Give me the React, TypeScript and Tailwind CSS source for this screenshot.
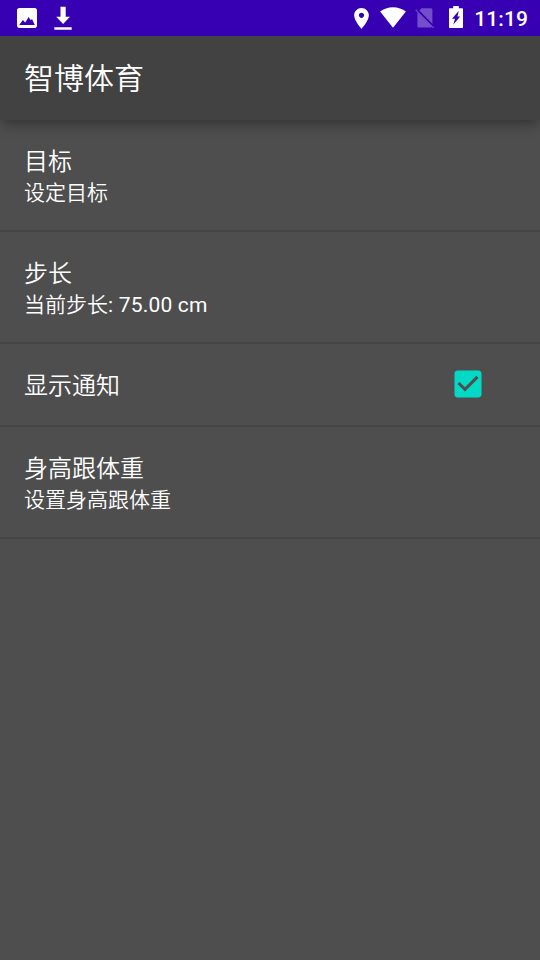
// Settings screen: status bar, toolbar and a flat list of preferences.

import { useState } from 'react';

type Preference = {
  id: string;
  title: string;
  summary?: string;
  value?: string;
  checkable?: boolean;
};

const PREFERENCES: Preference[] = [
  { id: 'goal', title: '目标', summary: '设定目标' },
  { id: 'step', title: '步长', summary: '当前步长', value: ': 75.00 cm' },
  { id: 'notify', title: '显示通知', checkable: true },
  { id: 'body', title: '身高跟体重', summary: '设置身高跟体重' },
];

export default function App() {
  const [notify, setNotify] = useState(true);

  return (
    <div className="flex h-[960px] w-[540px] flex-col overflow-hidden bg-[#4e4e4e] font-[Roboto,'Noto_Sans_CJK_SC',sans-serif] font-[350] text-white">
      <StatusBar />
      <header className="relative z-10 flex h-[84px] shrink-0 items-center bg-[#424242] px-6 pt-px shadow-[0_6px_12px_-2px_rgba(0,0,0,0.35)]">
        <h1 className="text-[30px] font-[350] leading-9">智博体育</h1>
      </header>
      <main className="flex flex-1 flex-col">
        {PREFERENCES.map((p) =>
          p.checkable ? (
            <button
              key={p.id}
              type="button"
              role="checkbox"
              aria-checked={notify}
              onClick={() => setNotify(!notify)}
              className="flex h-[83px] items-start justify-between border-b-2 border-[#454545] pl-6 pr-[54px] pt-[22px] text-left"
            >
              <span className="pt-1 text-2xl leading-8">{p.title}</span>
              <CheckBox checked={notify} />
            </button>
          ) : (
            <button
              key={p.id}
              type="button"
              className="flex h-28 flex-col border-b-2 border-[#454545] px-6 pt-[26px] text-left"
            >
              <span className="text-2xl leading-8">{p.title}</span>
              <span className="text-[21px] leading-[31px]">
                {p.summary}
                {p.value && <span className="font-[370] tracking-[0.2px]">{p.value}</span>}
              </span>
            </button>
          ),
        )}
      </main>
    </div>
  );
}

function CheckBox({ checked }: { checked: boolean }) {
  return (
    <svg viewBox="0 0 24 24" className="size-9 fill-[#03dac5]" aria-hidden="true">
      {checked ? (
        <path d="M19 3H5c-1.11 0-2 .9-2 2v14c0 1.1.89 2 2 2h14c1.11 0 2-.9 2-2V5c0-1.1-.89-2-2-2zm-9 14l-5-5 1.41-1.41L10 14.17l7.59-7.59L19 8l-9 9z" />
      ) : (
        <path d="M19 5v14H5V5h14m0-2H5c-1.1 0-2 .9-2 2v14c0 1.1.9 2 2 2h14c1.1 0 2-.9 2-2V5c0-1.1-.9-2-2-2z" />
      )}
    </svg>
  );
}

function StatusBar() {
  return (
    <div className="flex h-9 shrink-0 items-center justify-between bg-[#3700b3] pl-[17px] pr-3">
      <div className="flex h-9 items-start gap-[17px]">
        {/* picture */}
        <svg viewBox="3 3 18 18" className="mt-2 h-5 w-5 fill-white" aria-hidden="true">
          <path d="M21 19V5c0-1.1-.9-2-2-2H5c-1.1 0-2 .9-2 2v14c0 1.1.9 2 2 2h14c1.1 0 2-.9 2-2zM5 18.3l3.3-4.5 2.1 2.3 3.1-4.9 1.8 2.8 1.2-1.1L19 18.3z" />
        </svg>
        {/* download */}
        <svg viewBox="0 0 18 24" className="mt-1.5 h-6 w-[18px] fill-white" aria-hidden="true">
          <path d="M6.5.8h5.2v10H16L9.1 18l-6.900-7.200h4.300zM.3 21.300h17.400v2.400H.3z" />
        </svg>
      </div>
      <div className="flex h-9 items-start">
        {/* location */}
        <svg viewBox="5 2 14 20" className="mt-2 h-[21px] w-[15px] fill-white" aria-hidden="true">
          <path d="M12 2C8.13 2 5 5.13 5 9c0 5.25 7 13 7 13s7-7.75 7-13c0-3.87-3.13-7-7-7zm0 9.5c-1.38 0-2.5-1.12-2.5-2.5s1.12-2.5 2.5-2.5 2.5 1.12 2.5 2.5-1.12 2.5-2.5 2.5z" />
        </svg>
        {/* wifi */}
        <svg viewBox="0 0 26 21" className="ml-[11px] mt-[7px] h-[21px] w-[26px] fill-white" aria-hidden="true">
          <path d="M13 20.7.1 4.6C3.6 1.8 8.1.2 13 .2s9.4 1.6 12.9 4.4z" />
        </svg>
        {/* no sim */}
        <svg viewBox="0 0 20 21" className="ml-[9px] mt-2 h-[21px] w-5" aria-hidden="true">
          <path
            d="M6.5.2h9.3c.9 0 1.6.7 1.6 1.6v14.1L4.3 2.6zM2.400 4.400 17 19c-.3.300-.7.500-1.100.5H4c-.9 0-1.600-.7-1.600-1.600z"
            className="fill-white/30"
          />
          <path d="M.7 1.900 18.600 19.800" className="stroke-white/30" strokeWidth="1.300" />
          <path d="M2.800 2.400 18.400 18" className="stroke-[#3700b3]" strokeWidth="1.200" />
        </svg>
        {/* battery, charging */}
        <svg viewBox="0 0 14 22" className="ml-[14px] mt-1.5 h-[22px] w-3.5 fill-white" aria-hidden="true">
          <path
            fillRule="evenodd"
            d="M4.2 0h5.6v2.2H13c.6 0 1 .4 1 1V21c0 .6-.4 1-1 1H1c-.6 0-1-.4-1-1V3.2c0-.6.4-1 1-1h3.200zM9.800 4.800 3 12.700h3L4.200 18.800 11.200 10.400H8.400z"
          />
        </svg>
        <span className="ml-[11px] text-[21px] font-medium leading-[38px] tracking-[0.1px]">11:19</span>
      </div>
    </div>
  );
}
